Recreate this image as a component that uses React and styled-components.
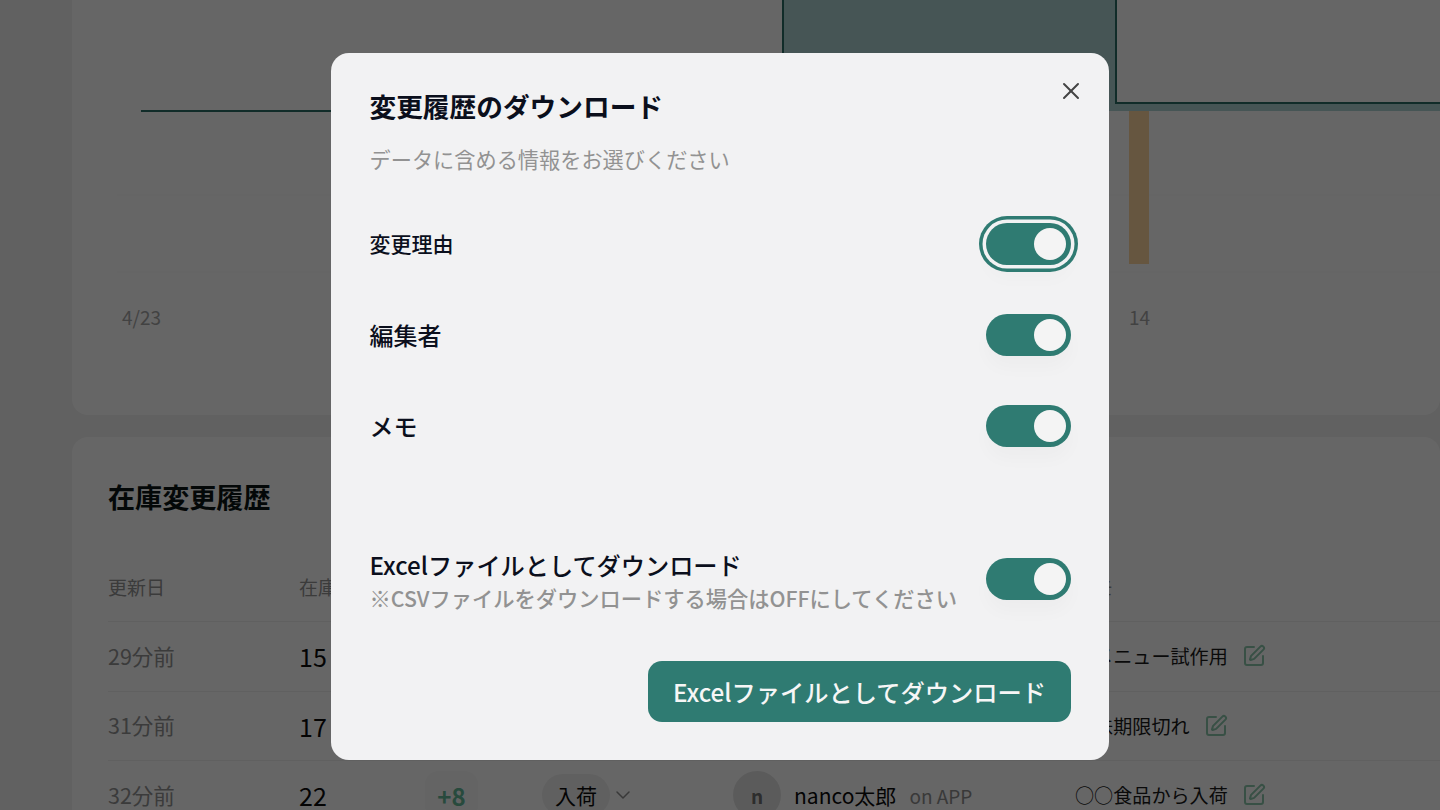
import React from "react";
import styled, { createGlobalStyle } from "styled-components";
import { X, SquarePen, ChevronDown } from "lucide-react";

const GlobalStyle = createGlobalStyle`
  html, body {
    margin: 0;
    height: 810px;
    overflow: hidden;
    background: #f3f3f3;
    font-family: "Noto Sans CJK JP", "Noto Sans", sans-serif;
  }
`;

const Page = styled.div`
  height: 810px;
  overflow: hidden;
  padding-left: 72px;
`;

const Card = styled.section`
  background: #fff;
  border-radius: ${(props) => (props.$top ? "0 0 16px 16px" : "16px 16px 0 0")};
  height: ${(props) => (props.$top ? "415px" : "auto")};
  margin-bottom: 22px;
`;

const ChartSvg = styled.svg`
  display: block;
`;

const Axis = styled.div`
  display: flex;
  justify-content: space-between;
  width: 1028px;
  padding: 13px 0 0 50px;
  font-size: 19px;
  line-height: 28px;
  color: #a6a6a6;
`;

const TableCard = styled.div`
  padding: 40px 0 0 36px;
`;

const Title = styled.h2`
  margin: 0 0 35px;
  font-size: 27.1px;
  line-height: 40px;
  font-weight: 700;
  color: #0c1616;
`;

const Row = styled.div`
  display: grid;
  grid-template-columns: 191px 126px 117px 191px 342px 1fr;
  align-items: center;
  height: ${(props) => (props.$head ? "70px" : "69.5px")};
  box-sizing: border-box;
  border-bottom: 1px solid #f0f0f0;
  font-size: 19.1px;
  color: #1a1a1a;
`;

const Muted = styled.div`
  color: #949494;
  font-size: ${(props) => (props.$head ? "19px" : "21.5px")};
  margin-top: ${(props) => (props.$head ? "0" : "-2px")};
`;

const Stock = styled.div`
  font-size: 25px;
  color: #0c0c0c;
`;

const Delta = styled.div`
  width: 53px;
  height: 48px;
  border-radius: 14px;
  background: #f9f9f9;
  display: flex;
  align-items: center;
  justify-content: center;
  font-size: 24px;
  font-weight: 700;
  color: #64b898;
`;

const Kind = styled.div`
  display: flex;
  align-items: center;
  gap: 1px;
  font-size: 21px;
  color: #0c0c0c;

  span {
    padding: 6px 13px;
    border-radius: 24px;
    background: #f0f0f0;
  }

  svg {
    color: #909090;
  }
`;

const User = styled.div`
  display: flex;
  align-items: center;
  gap: 13px;
  font-size: 21px;
  color: #0c0c0c;

  small {
    font-size: 19px;
    color: #909090;
  }
`;

const Avatar = styled.div`
  width: 48px;
  height: 48px;
  border-radius: 50%;
  background: #e4e4e4;
  display: flex;
  align-items: center;
  justify-content: center;
  font-size: 19px;
  font-weight: 700;
  color: #707070;
`;

const Memo = styled.div`
  display: flex;
  align-items: center;
  gap: 14.5px;
  white-space: nowrap;

  svg {
    color: #8cc8ac;
  }
`;

const Overlay = styled.div`
  position: fixed;
  inset: 0;
  background: rgba(0, 0, 0, 0.6);
  display: flex;
  justify-content: center;
  align-items: flex-start;
  padding-top: 53px;
`;

const Modal = styled.div`
  position: relative;
  width: 778px;
  height: 707px;
  box-sizing: border-box;
  padding: 33px 38px 38px 38.5px;
  border-radius: 18px;
  background: #f2f2f3;
  display: flex;
  flex-direction: column;
`;

const CloseButton = styled.button`
  position: absolute;
  top: 24px;
  right: 24px;
  width: 28px;
  height: 28px;
  padding: 0;
  border: 0;
  background: none;
  color: #444;
  display: flex;
`;

const ModalTitle = styled.h3`
  margin: 0;
  font-size: 26.7px;
  line-height: 40px;
  font-weight: 700;
  color: #0b0f1c;
  white-space: nowrap;
`;

const Sub = styled.p`
  margin: 18px 0 49px;
  font-size: 21.2px;
  line-height: 30px;
  color: #929292;
`;

const Options = styled.div`
  display: flex;
  flex-direction: column;
  gap: 49px;
`;

const Option = styled.div`
  display: flex;
  align-items: center;
  justify-content: space-between;
  height: 42px;
  font-weight: 500;
  color: #0b0f1c;
  font-size: ${(props) => (props.$small ? "21px" : "24px")};
`;

const OptionLabel = styled.span`
  margin-top: -2px;
`;

const ExcelRow = styled.div`
  display: flex;
  justify-content: space-between;
  align-items: flex-start;
  margin-top: 101px;
`;

const ExcelLabel = styled.div`
  font-size: 24.2px;
  line-height: 34px;
  font-weight: 500;
  color: #0b0f1c;
  white-space: nowrap;
`;

const Note = styled.div`
  font-size: 21.25px;
  line-height: 32px;
  font-weight: 500;
  color: #929292;
  white-space: nowrap;
`;

const Toggle = styled.div`
  flex: none;
  width: 85px;
  height: 42px;
  box-sizing: border-box;
  padding: 5px;
  border-radius: 21px;
  background: #2f7b72;
  display: flex;
  justify-content: flex-end;
  margin-top: ${(props) => props.$offset || 0}px;
  box-shadow: ${(props) =>
    props.$focus
      ? "0 0 0 3.5px #f2f2f3, 0 0 0 7px #2f7b72, 0 14px 18px rgba(0,0,0,.02)"
      : "0 12px 18px rgba(0,0,0,.025)"};

  &::after {
    content: "";
    width: 32px;
    height: 32px;
    border-radius: 50%;
    background: #f4f4f4;
  }
`;

const DownloadButton = styled.button`
  align-self: flex-end;
  margin-top: 47px;
  width: 423px;
  height: 61px;
  padding: 0;
  border: 0;
  border-radius: 14px;
  background: #2f7b72;
  color: #f6f6f6;
  font-family: inherit;
  font-size: 24.25px;
  font-weight: 500;
  white-space: nowrap;
`;

const rows = [
  { date: "29分前", stock: 15, delta: "-2", kind: "出荷", memo: "新メニュー試作用" },
  { date: "31分前", stock: 17, delta: "-5", kind: "廃棄", memo: "賞味期限切れ" },
  { date: "32分前", stock: 22, delta: "+8", kind: "入荷", memo: "○○食品から入荷" },
];

function Chart() {
  return (
    <ChartSvg width="1368" height="290" viewBox="0 0 1368 290">
      <path d="M45 195H1368M45 272H1368" stroke="#fafafa" strokeWidth="1" />
      <path d="M711 111V0H1044V103H1368V111Z" fill="#afd4d4" />
      <path d="M69 111H711V0M1044 0V103H1368" fill="none" stroke="#2c6e66" strokeWidth="2" />
      <rect x="1057" y="111" width="20" height="153" fill="#ffd6a0" />
    </ChartSvg>
  );
}

export default function App() {
  return (
    <>
      <GlobalStyle />
      <Page>
        <Card $top>
          <Chart />
          <Axis>
            <span>4/23</span>
            <span>14</span>
          </Axis>
        </Card>
        <Card>
          <TableCard>
            <Title>在庫変更履歴</Title>
            <Row $head>
              <Muted $head>更新日</Muted>
              <Muted $head>在庫数</Muted>
              <Muted $head>変更数</Muted>
              <Muted $head>種別</Muted>
              <Muted $head>編集者</Muted>
              <Muted $head>メモ</Muted>
            </Row>
            {rows.map((row) => (
              <Row key={row.date}>
                <Muted>{row.date}</Muted>
                <Stock>{row.stock}</Stock>
                <Delta>{row.delta}</Delta>
                <Kind>
                  <span>{row.kind}</span>
                  <ChevronDown size={24} strokeWidth={1.5} />
                </Kind>
                <User>
                  <Avatar>n</Avatar>
                  nanco太郎
                  <small>on APP</small>
                </User>
                <Memo>
                  {row.memo}
                  <SquarePen size={24} strokeWidth={2} />
                </Memo>
              </Row>
            ))}
          </TableCard>
        </Card>
      </Page>
      <Overlay>
        <Modal>
          <CloseButton aria-label="閉じる">
            <X size={28} strokeWidth={1.7} />
          </CloseButton>
          <ModalTitle>変更履歴のダウンロード</ModalTitle>
          <Sub>データに含める情報をお選びください</Sub>
          <Options>
            <Option $small>
              <OptionLabel>変更理由</OptionLabel>
              <Toggle $focus />
            </Option>
            <Option>
              <OptionLabel>編集者</OptionLabel>
              <Toggle />
            </Option>
            <Option>
              <OptionLabel>メモ</OptionLabel>
              <Toggle />
            </Option>
          </Options>
          <ExcelRow>
            <div>
              <ExcelLabel>Excelファイルとしてダウンロード</ExcelLabel>
              <Note>※CSVファイルをダウンロードする場合はOFFにしてください</Note>
            </div>
            <Toggle $offset={10} />
          </ExcelRow>
          <DownloadButton>Excelファイルとしてダウンロード</DownloadButton>
        </Modal>
      </Overlay>
    </>
  );
}
